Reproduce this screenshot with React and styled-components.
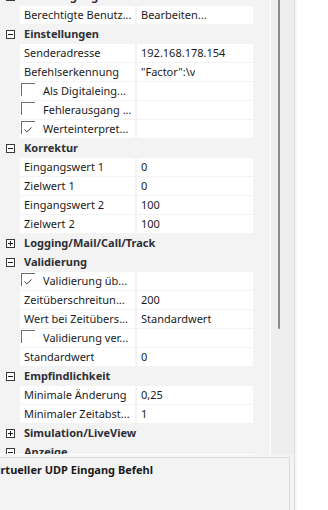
import React from "react";
import styled, { createGlobalStyle } from "styled-components";

const GlobalStyle = createGlobalStyle`
  html, body {
    margin: 0;
    padding: 0;
    background: #ffffff;
  }
  body {
    font-family: "Noto Sans", "Open Sans", sans-serif;
    font-size: 11px;
    color: #1b1b1b;
  }
`;

const rows = [
  { type: "cat", label: "Berechtigung", open: true },
  { label: "Berechtigte Benutz...", value: "Bearbeiten..." },
  { type: "cat", label: "Einstellungen", open: true },
  { label: "Senderadresse", value: "192.168.178.154" },
  { label: "Befehlserkennung", value: '"Factor":\\v' },
  { type: "check", label: "Als Digitaleing...", checked: false },
  { type: "check", label: "Fehlerausgang ...", checked: false },
  { type: "check", label: "Werteinterpret...", checked: true },
  { type: "cat", label: "Korrektur", open: true },
  { label: "Eingangswert 1", value: "0" },
  { label: "Zielwert 1", value: "0" },
  { label: "Eingangswert 2", value: "100" },
  { label: "Zielwert 2", value: "100" },
  { type: "cat", label: "Logging/Mail/Call/Track", open: false },
  { type: "cat", label: "Validierung", open: true },
  { type: "check", label: "Validierung üb...", checked: true },
  { label: "Zeitüberschreitun...", value: "200" },
  { label: "Wert bei Zeitübers...", value: "Standardwert" },
  { type: "check", label: "Validierung ver...", checked: false },
  { label: "Standardwert", value: "0" },
  { type: "cat", label: "Empfindlichkeit", open: true },
  { label: "Minimale Änderung", value: "0,25" },
  { label: "Minimaler Zeitabst...", value: "1" },
  { type: "cat", label: "Simulation/LiveView", open: false },
  { type: "cat", label: "Anzeige", open: true },
];

const ExpandIcon = ({ open }) => (
  <svg width="9" height="9" viewBox="0 0 9 9">
    <rect x="0.5" y="0.5" width="8" height="8" fill="#fff" stroke="#3a3a3a" />
    <line x1="2" y1="4.5" x2="7" y2="4.5" stroke="#1e1e1e" />
    {!open && <line x1="4.5" y1="2" x2="4.5" y2="7" stroke="#1e1e1e" />}
  </svg>
);

const CheckMark = () => (
  <svg width="8" height="6" viewBox="0 0 8 6">
    <polyline
      points="0.5,2.5 2.8,4.8 7.5,0.5"
      fill="none"
      stroke="#333"
      strokeWidth="1"
    />
  </svg>
);

const PropertyGrid = () => {
  return (
    <>
      <GlobalStyle />
      <Window>
        <GridArea>
          <Viewport>
            <RowList>
              {rows.map((row, i) => {
                if (row.type === "cat") {
                  return (
                    <CategoryRow key={i}>
                      <Toggle>
                        <ExpandIcon open={row.open} />
                      </Toggle>
                      <CategoryName>{row.label}</CategoryName>
                    </CategoryRow>
                  );
                }
                return (
                  <PropRow key={i}>
                    <span />
                    <LabelCell>
                      {row.type === "check" && (
                        <CheckBox>{row.checked && <CheckMark />}</CheckBox>
                      )}
                      <CellText $check={row.type === "check"}>
                        {row.label}
                      </CellText>
                    </LabelCell>
                    <ValueCell>
                      <CellText>{row.value}</CellText>
                    </ValueCell>
                  </PropRow>
                );
              })}
            </RowList>
            <BottomEdge />
          </Viewport>
          <ScrollTrack>
            <Thumb />
          </ScrollTrack>
        </GridArea>
        <DescPanel>
          <DescTitle>Virtueller UDP Eingang Befehl</DescTitle>
        </DescPanel>
      </Window>
    </>
  );
};

const Window = styled.main`
  width: 294px;
  height: 510px;
  background: #f3f3f3;
  display: flex;
  flex-direction: column;
  overflow: hidden;
  box-shadow: 1px 0 0 #dcdcdc, 3px 0 0 #f6f6f6;
`;

const GridArea = styled.section`
  height: 455px;
  display: flex;
  flex-shrink: 0;
`;

const Viewport = styled.div`
  width: 273px;
  display: flex;
  flex-direction: column;
`;

const RowList = styled.div`
  height: 454px;
  overflow: hidden;
  display: flex;
  flex-direction: column;
  gap: 1px;

  & > :first-child {
    margin-top: -13px;
  }
`;

const BottomEdge = styled.div`
  width: 255px;
  height: 1px;
  background: #ffffff;
`;

const CategoryRow = styled.div`
  height: 18px;
  flex-shrink: 0;
  width: 255px;
  display: flex;
  align-items: center;
`;

const Toggle = styled.span`
  width: 20px;
  padding-left: 6px;
  box-sizing: border-box;
  display: flex;
  align-items: center;
  height: 18px;
  padding-top: 1px;
`;

const CategoryName = styled.span`
  padding-left: 4px;
  font-weight: 700;
  color: #2f2f37;
  white-space: nowrap;
  line-height: 18px;
`;

const PropRow = styled.div`
  height: 18px;
  flex-shrink: 0;
  width: 255px;
  display: grid;
  grid-template-columns: 20px 115px 118px;

  & > :nth-child(3) {
    margin-left: 2px;
  }
`;

const LabelCell = styled.div`
  background: #ffffff;
  display: flex;
  align-items: flex-start;
  overflow: hidden;
`;

const ValueCell = styled.div`
  background: #ffffff;
  display: flex;
  overflow: hidden;
`;

const CheckBox = styled.span`
  flex-shrink: 0;
  width: 14px;
  height: 13px;
  margin: 1px 0 0 1px;
  border-top: 1px solid #6e6e6e;
  border-left: 1px solid #6e6e6e;
  box-sizing: border-box;
  display: flex;
  align-items: flex-end;
  padding: 0 0 1px 2px;
`;

const CellText = styled.span`
  padding-left: ${({ $check }) => ($check ? "8px" : "4px")};
  white-space: nowrap;
  overflow: hidden;
  line-height: 18px;
  color: #1b1b1b;
`;

const ScrollTrack = styled.div`
  width: 16px;
  height: 454px;
  border-left: 1px solid #ffffff;
  background: #eeeeee;
  padding-left: 7px;
  box-sizing: content-box;
`;

const Thumb = styled.div`
  width: 2px;
  height: 329px;
  background: #8a8a8a;
  border-radius: 0 0 1px 1px;
`;

const DescPanel = styled.section`
  margin-top: 2px;
  width: 289px;
  flex: 1;
  border-top: 1px solid #dcdcdc;
  border-right: 1px solid #dcdcdc;
  background: #f3f3f3;
  overflow: hidden;
`;

const DescTitle = styled.h4`
  margin: 3px 0 0 -10px;
  font-size: 11px;
  font-weight: 700;
  line-height: 17px;
  color: #1b1b1b;
  white-space: nowrap;
`;

export default PropertyGrid;
